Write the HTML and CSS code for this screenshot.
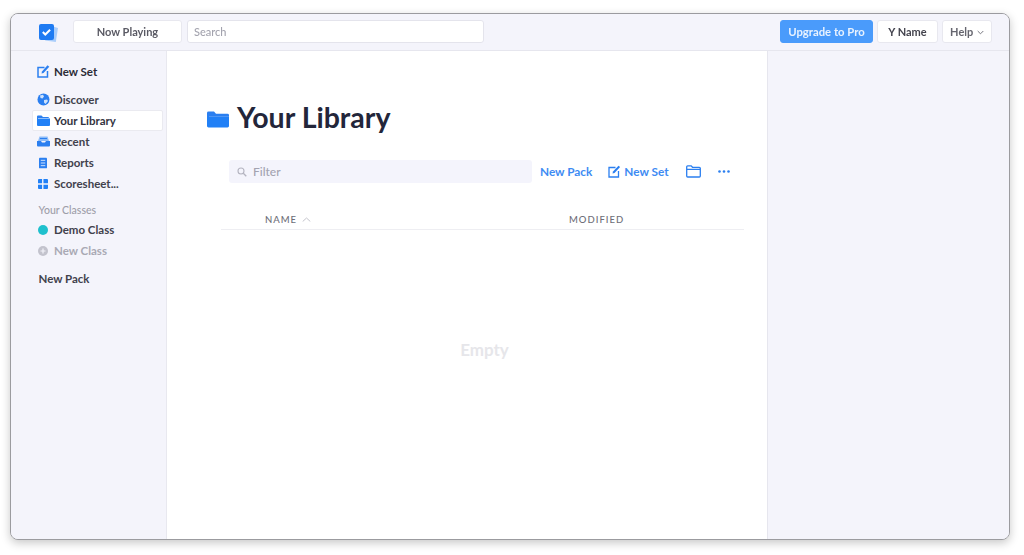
FILE: index.html
```html
<!DOCTYPE html>
<html lang="en">
<head>
<meta charset="utf-8">
<title>Your Library</title>
<link rel="stylesheet" href="styles.css">
</head>
<body>
<div class="window">
  <header class="topbar">
    <div class="logo">
      <svg width="20" height="18" viewBox="0 0 20 18"><path d="M14 2.500l5 1.500-2.200 14L6 16.500z" fill="#a9cdfb"/><rect x="0" y="0" width="15" height="16" rx="2" fill="#1f7bf2"/><path d="M3.800 8l2.500 2.500 4.800-4.800" fill="none" stroke="#fff" stroke-width="2"/></svg>
    </div>
    <button class="btn now">Now Playing</button>
    <div class="search">Search</div>
    <button class="btn upgrade">Upgrade to Pro</button>
    <button class="btn name">Y Name</button>
    <button class="btn help">Help <svg width="7" height="5" viewBox="0 0 7 5"><path d="M.7 1l2.800 2.800L6.300 1" fill="none" stroke="#77777f" stroke-width="1"/></svg></button>
  </header>
  <div class="body">
    <nav class="sidebar">
      <a class="item strong"><svg class="ic" width="13" height="13" viewBox="0 0 13 13"><path d="M7.500 2.500H1v9.500h9.500V6" fill="none" stroke="#2b7ff0" stroke-width="1.500"/><path d="M4.500 8.500l.5-2L10.500.3l1.800 1.500L6.500 8z" fill="#2b7ff0"/></svg>New Set</a>
      <a class="item first"><svg class="ic" width="13" height="13" viewBox="0 0 13 13"><circle cx="6.500" cy="6.500" r="6" fill="#2b7ff0"/><path d="M3 2.500l3-.8 1 1.800-1.500 2L3.500 5zM7 7l3-.5 1 1.500-2.500 3L7 9.500z" fill="#cfe2fb"/></svg>Discover</a>
      <a class="item active"><svg class="ic" width="13" height="11" viewBox="0 0 13 11"><path d="M0 1.500Q0 .5 1 .5h3.500L6 2h5.500l.5 1H1v1H0z" fill="#2b7ff0"/><path d="M0 3.500h13v6.500q0 1-1 1H1q-1 0-1-1z" fill="#2180f6"/></svg>Your Library</a>
      <a class="item"><svg class="ic" width="13" height="11" viewBox="0 0 13 11"><path d="M2.500.5h8L12 5H1z" fill="#8dbcf8"/><path d="M0 5h4l1 1.500h3L9 5h4v4.500q0 1-1 1H1q-1 0-1-1z" fill="#2b7ff0"/><path d="M3 2h7v1H3z" fill="#2b7ff0"/></svg>Recent</a>
      <a class="item"><svg class="ic rep" width="9" height="12" viewBox="0 0 9 12"><rect width="9" height="12" rx="1" fill="#2b7ff0"/><path d="M2 3h5M2 6h5M2 9h5" stroke="#e4effd" stroke-width="1"/></svg>Reports</a>
      <a class="item"><svg class="ic ic-c" width="10" height="10" viewBox="0 0 11 11"><path d="M0 1q0-1 1-1h3.500v4.800H0zM6 0h4q1 0 1 1v3.800H6zM0 6.200h4.500V11H1q-1 0-1-1zM6 6.200h5V10q0 1-1 1H6z" fill="#2180f6"/></svg>Scoresheet...</a>
      <div class="label">Your Classes</div>
      <a class="item"><span class="dot"></span>Demo Class</a>
      <a class="item muted"><svg class="ic ic-c" width="10" height="10" viewBox="0 0 10 10"><circle cx="5" cy="5" r="5" fill="#c3c3cd"/><path d="M5 2.500v5M2.500 5h5" stroke="#f3f3fa" stroke-width="1.200"/></svg>New Class</a>
      <a class="item pack">New Pack</a>
    </nav>
    <main class="main">
      <h1 class="title"><svg width="22" height="17" viewBox="0 0 22 18" preserveAspectRatio="none"><path d="M0 2Q0 .5 1.500 .5H7L9 3h11.500Q22 3 22 4.500V6H2v2H0z" fill="#2b7ff0"/><path d="M0 6h22v10q0 1.500-1.500 1.500h-19Q0 17.500 0 16z" fill="#2180f6"/></svg>Your Library</h1>
      <div class="tools">
        <div class="filter"><svg width="10" height="10" viewBox="0 0 10 10"><circle cx="4" cy="4" r="3" fill="none" stroke="#b4b4c0" stroke-width="1.100"/><path d="M6.300 6.300L9.300 9.300" stroke="#b4b4c0" stroke-width="1.300"/></svg>Filter</div>
        <a class="link pack-link">New Pack</a>
        <a class="link set-link"><svg width="13" height="13" viewBox="0 0 13 13"><path d="M7.500 2.500H1v9.500h9.500V6" fill="none" stroke="#2b7ff0" stroke-width="1.300"/><path d="M4.500 8.500l.5-2L10.500.7l1.600 1.400L6.500 8z" fill="#2b7ff0"/></svg>New Set</a>
        <svg class="folder" width="15" height="13" viewBox="0 0 15 13"><path d="M.7 11V1.800q0-1 1-1h3.500l1.300 1.500h6.800q1 0 1 1V11q0 1-1 1H1.700q-1 0-1-1zM.7 4.300h13.600" fill="none" stroke="#2b7ff0" stroke-width="1.300"/></svg>
        <svg class="more" width="12" height="3" viewBox="0 0 12 3"><circle cx="1.500" cy="1.500" r="1.300" fill="#2b7ff0"/><circle cx="6" cy="1.500" r="1.300" fill="#2b7ff0"/><circle cx="10.500" cy="1.500" r="1.300" fill="#2b7ff0"/></svg>
      </div>
      <div class="thead">
        <span class="col-name">NAME <svg width="9" height="5" viewBox="0 0 9 5"><path d="M.7 4.500l3.800-3.500 3.800 3.500" fill="none" stroke="#c4c4cc" stroke-width="1"/></svg></span>
        <span class="col-mod">MODIFIED</span>
      </div>
      <div class="empty">Empty</div>
    </main>
    <aside class="right"></aside>
  </div>
</div>
</body>
</html>
```
FILE: styles.css
```css
* { box-sizing: border-box; }
html, body { height: 100%; }
body {
  margin: 0;
  padding: 13px 14px 15px 10px;
  background: #fff;
  font-family: Lato, "Open Sans", sans-serif;
  overflow: hidden;
}
a { display: flex; }
.window {
  height: 527px;
  display: flex;
  flex-direction: column;
  border: 1px solid #9b9b9f;
  border-radius: 8px;
  overflow: hidden;
  box-shadow: 0 3px 10px rgba(0,0,0,.22);
  background: #f4f4fb;
  filter: blur(.35px);
}
.topbar {
  height: 37px;
  flex: none;
  display: flex;
  align-items: center;
  padding: 0 17px 2px 28px;
  background: #f4f4fb;
  border-bottom: 1px solid #e6e6ee;
}
.logo { width: 34px; display: flex; align-items: center; }
.logo svg { margin-top: 3px; }
.btn {
  height: 23px;
  padding: 0;
  border: 1px solid #e8e8ef;
  border-radius: 3px;
  background: #fff;
  font: 700 11px Lato, sans-serif;
  color: #5a5a64;
  flex: none;
}
.now { width: 109px; }
.search {
  width: 297px;
  height: 23px;
  margin-left: 5px;
  margin-right: auto;
  padding: 0 6px;
  border: 1px solid #e4e4ec;
  border-radius: 3px;
  background: #fff;
  font-size: 11px;
  font-weight: 500;
  line-height: 22px;
  color: #a3a3ae;
}
.upgrade {
  width: 93px;
  border-color: #4a9bfb;
  background: #4a9bfb;
  color: #e8f2ff;
  font-size: 11.300px;
}
.name { width: 61px; margin-left: 4px; color: #44444e; }
.help { width: 50px; margin-left: 4px; color: #66666f; }
.help svg { margin-left: 1px; vertical-align: 1px; }
.body { flex: 1; display: flex; min-height: 0; }
.sidebar {
  width: 156px;
  flex: none;
  padding: 10px 3px 0 21px;
  background: #f4f4fb;
  border-right: 1px solid #e8e8ef;
  display: flex;
  flex-direction: column;
}
.item {
  height: 21px;
  padding-left: 22px;
  display: flex;
  align-items: center;
  font-size: 11.500px;
  font-weight: 700;
  color: #41414c;
  position: relative;
}
.ic, .dot { position: absolute; left: 5px; }
.ic-c, .dot { left: 6px; }
.rep { left: 7px; width: 8px; }
.strong { color: #2b2b36; }
.first { margin-top: 7px; }
.active {
  padding-left: 21px;
  background: #fff;
  border: 1px solid #eaeaf0;
  border-radius: 2px;
  color: #33333e;
}
.active .ic { left: 4px; }
.label {
  margin: 7px 0 0 6.500px;
  height: 18px;
  line-height: 18px;
  font-size: 10.500px;
  font-weight: 500;
  color: #9e9ea9;
}
.dot {
  width: 10px;
  height: 10px;
  border-radius: 50%;
  background: #1fc0cd;
}
.muted { color: #a9a9b4; }
.pack { margin-top: 7px; padding-left: 6.500px; }
.main {
  width: 601px;
  flex: none;
  background: #fff;
  border-right: 1px solid #e6e6ee;
  padding: 0 23px 0 40px;
  display: flex;
  flex-direction: column;
}
.title {
  margin: 49px 0 0;
  height: 34px;
  display: flex;
  align-items: center;
  gap: 8px;
  font-size: 28.500px;
  font-weight: 700;
  color: #23263a;
}
.title svg { margin-top: 4px; }
.tools {
  margin: 26px 0 0 22px;
  height: 23px;
  display: flex;
  align-items: center;
  color: #2b7ff0;
}
.filter {
  width: 303px;
  height: 23px;
  padding-left: 8px;
  display: flex;
  align-items: center;
  gap: 6px;
  background: #f4f4fc;
  border-radius: 3px;
  font-size: 12px;
  font-weight: 500;
  color: #a3a3b0;
}
.link { align-items: center; font-size: 11.800px; font-weight: 700; color: #3e8bf3; }
.pack-link { margin-left: 8px; }
.set-link { margin-left: 16px; gap: 3px; }
.folder { margin-left: 17px; }
.more { margin-left: 17px; }
.thead {
  margin: 26px 0 0 14px;
  height: 21px;
  border-bottom: 1px solid #eeeef2;
  display: flex;
  align-items: center;
  font-size: 9.500px;
  font-weight: 500;
  letter-spacing: 1px;
  color: #6e6e78;
}
.col-name { margin-left: 44px; width: 304px; }
.col-name svg { margin-left: 1px; vertical-align: 1px; }
.empty {
  margin-top: 109px;
  text-align: center;
  padding-left: 18px;
  font-size: 17px;
  font-weight: 700;
  color: #e6e6ea;
}
.right { flex: 1; background: #f4f4fb; }
```
